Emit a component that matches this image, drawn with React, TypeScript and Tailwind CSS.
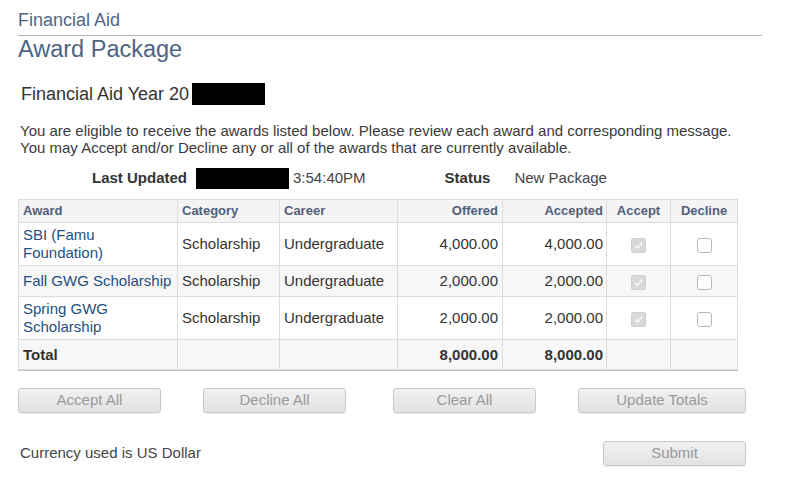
import React from "react";

const font = { fontFamily: '"Liberation Sans", Arial, sans-serif' };

function CheckedBox() {
  return (
    <span className="inline-flex h-[15px] w-[15px] items-center justify-center rounded-[2px] border border-[#d0d0d0] bg-[#d9d9d9] align-middle">
      <svg width="11" height="11" viewBox="0 0 12 12">
        <path d="M2.2 6.4 L4.8 9 L9.8 3" fill="none" stroke="#f6f6f6" strokeWidth="1.8" />
      </svg>
    </span>
  );
}

function EmptyBox() {
  return (
    <span className="inline-block h-[15px] w-[15px] rounded-[3px] border border-[#b8b8b8] bg-white align-middle" />
  );
}

const rows = [
  { award: ["SBI (Famu", "Foundation)"], cat: "Scholarship", career: "Undergraduate", off: "4,000.00", acc: "4,000.00", h: "h-[43px]", bg: "bg-white" },
  { award: ["Fall GWG Scholarship"], cat: "Scholarship", career: "Undergraduate", off: "2,000.00", acc: "2,000.00", h: "h-[31px]", bg: "bg-[#f7f7f7]" },
  { award: ["Spring GWG", "Scholarship"], cat: "Scholarship", career: "Undergraduate", off: "2,000.00", acc: "2,000.00", h: "h-[43px]", bg: "bg-white" },
];

function Btn({ label, w, ml }: { label: string; w: string; ml: string }) {
  return (
    <div
      className={`${w} ${ml} flex h-[25px] items-center justify-center rounded-[3px] border border-[#c9c9c9] bg-gradient-to-b from-[#f1f1f1] to-[#e2e2e2] text-[15px] text-[#9a9a9a] shadow-[0_1px_1px_rgba(0,0,0,0.08)]`}
    >
      {label}
    </div>
  );
}

export default function App() {
  const cell = "border border-[#dcdcdc] px-[4px] align-middle";
  return (
    <div className="h-[480px] w-[801px] overflow-hidden bg-white text-[#333]" style={font}>
      <div className="ml-[18px] h-[36px] w-[744px] border-b border-[#b0b0b0] pt-[9px] text-[18px] leading-[22px] text-[#4d6585]">
        Financial Aid
      </div>
      <div className="ml-[18px] text-[23.5px] leading-[26px] text-[#4d6585]">Award Package</div>

      <div className="ml-[21px] mt-[21px] flex h-[22px] items-center text-[18px] leading-[22px] text-[#333]">
        <span>Financial Aid Year 20</span>
        <span className="ml-[3px] inline-block h-[22px] w-[73px] bg-black" />
      </div>

      <div className="ml-[20px] mt-[17px] text-[15px] leading-[17px] text-[#3a3a3a]">
        <div>You are eligible to receive the awards listed below. Please review each award and corresponding message.</div>
        <div>You may Accept and/or Decline any or all of the awards that are currently available.</div>
      </div>

      <div className="mt-[12px] flex h-[21px] items-center text-[15px]">
        <span className="ml-[92px] font-bold text-[#333]">Last Updated</span>
        <span className="ml-[9px] inline-block h-[21px] w-[93px] bg-black" />
        <span className="ml-[4px] text-[#444]">3:54:40PM</span>
        <span className="ml-[79px] font-bold text-[#333]">Status</span>
        <span className="ml-[24px] text-[#444]">New Package</span>
      </div>

      <div className="ml-[18px] mt-[10px] w-[720px] border-r border-b border-[#c4c4c4]">
        <table className="w-[719px] table-fixed border-collapse text-[15px] leading-[18px]">
          <colgroup>
            <col className="w-[159px]" />
            <col className="w-[102px]" />
            <col className="w-[118px]" />
            <col className="w-[105px]" />
            <col className="w-[104px]" />
            <col className="w-[64px]" />
            <col className="w-[67px]" />
          </colgroup>
          <thead>
            <tr className="h-[23px] bg-[#f4f4f4] text-[13px] font-bold text-[#51607a]">
              <th className={`${cell} text-left`}>Award</th>
              <th className={`${cell} text-left`}>Category</th>
              <th className={`${cell} text-left`}>Career</th>
              <th className={`${cell} text-right`}>Offered</th>
              <th className={`${cell} pr-[3px] text-right`}>Accepted</th>
              <th className={`${cell} text-center`}>Accept</th>
              <th className={`${cell} text-center`}>Decline</th>
            </tr>
          </thead>
          <tbody>
            {rows.map((r, i) => (
              <tr key={i} className={`${r.h} ${r.bg}`}>
                <td className={`${cell} text-[#1f4f7e]`}>
                  {r.award.map((a, j) => (
                    <div key={j}>{a}</div>
                  ))}
                </td>
                <td className={cell}>{r.cat}</td>
                <td className={cell}>{r.career}</td>
                <td className={`${cell} text-right`}>{r.off}</td>
                <td className={`${cell} pr-[3px] text-right`}>{r.acc}</td>
                <td className={`${cell} text-center`}>
                  <CheckedBox />
                </td>
                <td className={`${cell} text-center`}>
                  <EmptyBox />
                </td>
              </tr>
            ))}
            <tr className="h-[30px] bg-[#f7f7f7] font-bold">
              <td className={cell}>Total</td>
              <td className={cell}></td>
              <td className={cell}></td>
              <td className={`${cell} text-right`}>8,000.00</td>
              <td className={`${cell} pr-[3px] text-right`}>8,000.00</td>
              <td className={cell}></td>
              <td className={cell}></td>
            </tr>
          </tbody>
        </table>
      </div>

      <div className="mt-[17px] flex">
        <Btn label="Accept All" w="w-[143px]" ml="ml-[18px]" />
        <Btn label="Decline All" w="w-[143px]" ml="ml-[42px]" />
        <Btn label="Clear All" w="w-[143px]" ml="ml-[47px]" />
        <Btn label="Update Totals" w="w-[168px]" ml="ml-[42px]" />
      </div>

      <div className="mt-[28px] flex items-center">
        <span className="ml-[20px] text-[15px] text-[#444]">Currency used is US Dollar</span>
        <div className="ml-auto mr-[55px]">
          <Btn label="Submit" w="w-[143px]" ml="ml-0" />
        </div>
      </div>
    </div>
  );
}
